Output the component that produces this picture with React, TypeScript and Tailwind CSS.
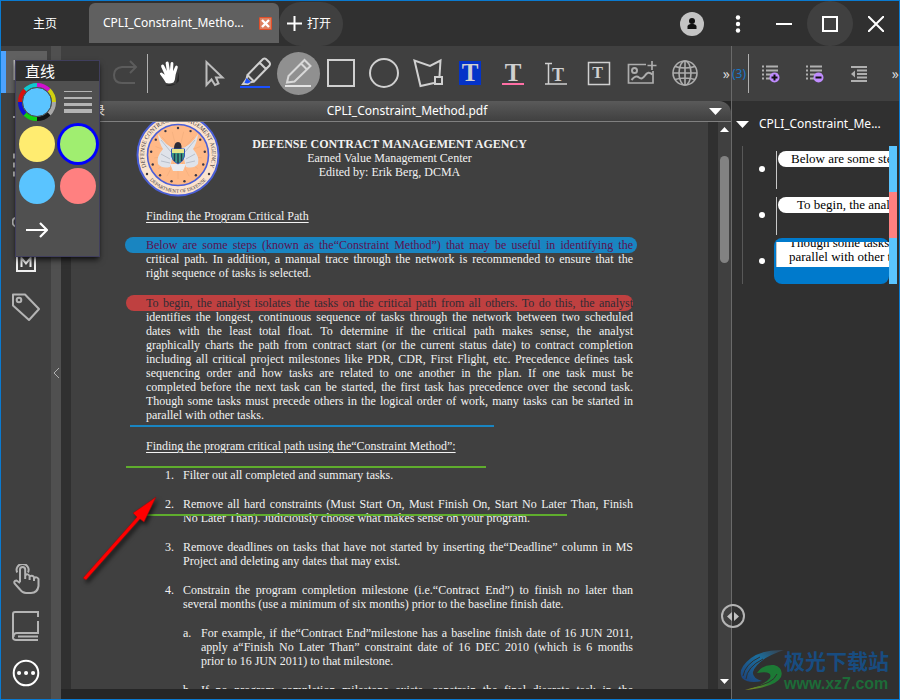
import type { ReactNode } from 'react'

const uiFont = "font-['Noto_Sans','Noto_Sans_CJK_SC',sans-serif]"
const docFont = "font-['Liberation_Serif',serif]"

type Tool = { name: string; icon: ReactNode; active?: boolean }

const Glyph = ({ x, y, size, fill = '#d0d0d0' }: { x: number; y: number; size: number; fill?: string }) => (
  <text x={x} y={y} fontSize={size} fill={fill} stroke="none" textAnchor="middle" fontFamily="Liberation Serif, serif" fontWeight="bold">
    T
  </text>
)

const tools: Tool[] = [
  {
    name: 'Hand',
    icon: (
      <g stroke="none">
        <path d="M17 33 Q25 36 31 29 L31 20 L28 32 Z" fill="#1c1c1c" opacity=".7" />
        <path
          d="M18 31 L15.5 27 L12.2 22.5 Q11.4 20.6 13.5 20.6 L16.8 22.8 L13.2 15 Q12.6 12.9 14.4 12.5 Q15.6 12.4 16.1 13.6 L18.8 19 L17.6 11 Q17.7 9.4 19.2 9.4 Q20.4 9.4 20.7 10.7 L21.9 18.4 L22.6 11.3 Q22.9 9.8 24.2 9.9 Q25.5 10.1 25.4 11.6 L25 19.3 L27.2 14.6 Q27.9 13.3 29 13.7 Q30.2 14.3 29.7 15.8 L27.6 22.8 L26.8 28 L25.5 30.5 Q21.5 32.2 18 31Z"
          fill="#fff"
        />
      </g>
    ),
  },
  {
    name: 'Select',
    icon: <path d="M15.5 10 V33 L20.5 27.5 L24 33 L27.5 31.5 L25 25.5 H31.5 Z" stroke="#bdbdbd" />,
  },
  {
    name: 'Highlighter',
    icon: (
      <>
        <path d="M29 7 Q30.5 6 32 7 L35.5 10.5 Q36.5 12 35.5 13.5 L20 29.5 L13.5 23 Z M25.5 10.5 L32 17 M13.5 23 L12.5 27 L16 30.5 L20 29.5 M12.5 27 L9 32 H14 L16 30.5" />
        <path d="M12.5 26 L17 30 L13.5 31.5 L10.5 31 Z" fill="#1a50ff" stroke="none" />
        <path d="M6 35 H36" stroke="#1a50ff" />
      </>
    ),
  },
  {
    name: 'Line',
    active: true,
    icon: (
      <>
        <path d="M10 30.5 L11.5 24 L27.5 8 L33.5 14 L17.5 29.5 Z M24 11.5 L30 17.5" stroke="#d8d8d8" />
        <path d="M8 34 H34" stroke="#e4e4e4" />
      </>
    ),
  },
  { name: 'Rectangle', icon: <rect x="8" y="8" width="26" height="26" /> },
  { name: 'Ellipse', icon: <circle cx="21" cy="21" r="14" /> },
  {
    name: 'Polygon',
    icon: (
      <>
        <path d="M28 31 L14.5 34 L8.5 8.5 L24 14 L34.5 8.5 L33.5 24" />
        <rect x="29" y="25" width="7" height="7" />
      </>
    ),
  },
  {
    name: 'Highlight text',
    icon: (
      <>
        <rect x="10" y="9" width="22" height="24" fill="#0433c8" stroke="none" />
        <Glyph x={21} y={29} size={25} />
      </>
    ),
  },
  {
    name: 'Underline text',
    icon: (
      <>
        <Glyph x={21} y={29} size={25} />
        <path d="M10 32 H32" stroke="#ff6fa5" />
      </>
    ),
  },
  {
    name: 'Insert text',
    icon: (
      <>
        <path d="M10 11.5 H17 M13.5 11.5 V32 M10 32 H32" strokeWidth="1.5" />
        <Glyph x={23} y={29} size={18} />
      </>
    ),
  },
  {
    name: 'Text box',
    icon: (
      <>
        <rect x="10.5" y="10.5" width="21" height="22" strokeWidth="1.5" />
        <Glyph x={19.5} y={26} size={16} />
      </>
    ),
  },
  {
    name: 'Image',
    icon: (
      <g stroke="#adadad">
        <path d="M25 12.5 H7.5 V31 H32 V19 M31 9 V18 M26.5 13.5 H35.5" strokeWidth="1.7" />
        <circle cx="13.5" cy="18.5" r="2.5" />
        <path d="M10.5 28 Q15 22.5 18 25.5 Q21 28 24 23.5 Q27 18.5 31.5 22.5" />
      </g>
    ),
  },
  {
    name: 'Web link',
    icon: (
      <g stroke="#adadad" strokeWidth="1.6">
        <circle cx="21" cy="21" r="12" />
        <ellipse cx="21" cy="21" rx="6" ry="12" />
        <path d="M21 9 V33 M9 21 H33 M11 14.5 Q21 17.5 31 14.5 M11 27.5 Q21 24.5 31 27.5" />
      </g>
    ),
  },
]

const ToolButton = ({ name, icon, active }: Tool) => (
  <button aria-label={name} className={`size-[43px] shrink-0 rounded-full ${active ? 'bg-[#909090]' : ''}`}>
    <svg viewBox="0 0 43 43" width="43" height="43" fill="none" stroke="#d0d0d0" strokeWidth="2">
      {icon}
    </svg>
  </button>
)

const TitleBar = () => (
  <header className="flex h-[45px] shrink-0 items-center bg-[#303030] text-[12px] text-white">
    <button className="w-[88px] shrink-0">主页</button>
    <div className="mt-[2px] flex h-10 w-[190px] shrink-0 items-center justify-between self-start rounded-t-md bg-[#606060] pr-[7px] pl-[14px]">
      <span className="whitespace-nowrap">CPLI_Constraint_Metho...</span>
      <button aria-label="Close tab" className="grid size-[13px] place-items-center rounded-[1px] border border-[#e04f2a] bg-[#dd8060]">
        <svg width="9" height="9" viewBox="0 0 9 9" stroke="#fff" strokeWidth="2.4">
          <path d="M1 1 L8 8 M8 1 L1 8" />
        </svg>
      </button>
    </div>
    <button className="flex h-11 w-16 shrink-0 items-center gap-1 rounded-full bg-[#404040] pl-[7px]">
      <svg width="17" height="17" viewBox="0 0 17 17" stroke="#fff" strokeWidth="2">
        <path d="M8.5 1 V16 M1 8.5 H16" />
      </svg>
      打开
    </button>
    <div className="ml-auto flex h-full items-center">
      <button aria-label="Account" className="grid h-full w-[46px] place-items-center">
        <svg width="24" height="24" viewBox="0 0 24 24">
          <circle cx="12" cy="12" r="12" fill="#c4c4c4" />
          <circle cx="12" cy="9" r="3" fill="#111" />
          <path d="M7.5 17 V14 Q8 12.5 10.5 12 H13.5 Q16 12.5 16.5 14 V17 Z" fill="#111" />
        </svg>
      </button>
      <button aria-label="Menu" className="grid h-full w-[46px] place-items-center">
        <svg width="6" height="18" viewBox="0 0 6 18" fill="#fff">
          <circle cx="3" cy="2.5" r="2.2" />
          <circle cx="3" cy="9" r="2.2" />
          <circle cx="3" cy="15.5" r="2.2" />
        </svg>
      </button>
      <button aria-label="Minimise" className="grid h-full w-[46px] place-items-center">
        <svg width="16" height="16" viewBox="0 0 16 16" stroke="#fff" strokeWidth="2">
          <path d="M0 8 H16" />
        </svg>
      </button>
      <button aria-label="Maximise" className="grid h-full w-[46px] place-items-center rounded-full bg-[#404040]">
        <svg width="16" height="16" viewBox="0 0 16 16" fill="none" stroke="#fff" strokeWidth="2">
          <rect x="1" y="1" width="14" height="14" />
        </svg>
      </button>
      <button aria-label="Close" className="grid h-full w-[46px] place-items-center">
        <svg width="16" height="16" viewBox="0 0 16 16" stroke="#fff" strokeWidth="2">
          <path d="M0 0 L16 16 M16 0 L0 16" />
        </svg>
      </button>
    </div>
  </header>
)

const sideTop: Tool[] = [
  { name: 'Pages', active: true, icon: <path d="M1.5 4 V22 H26 V4 Z" /> },
  { name: 'Outline', icon: <path d="M1 13 H26" /> },
  { name: 'Thumbnails', icon: <path d="M1 5 H6 M1 14 H6 M1 23 H6" strokeWidth="5" /> },
  {
    name: 'Search',
    icon: (
      <>
        <circle cx="5" cy="24" r="4.5" />
        <path d="M9 20 H24" />
      </>
    ),
  },
  {
    name: 'Bookmarks',
    icon: (
      <g stroke="#f0f0f0">
        <path d="M5 4 V26 H23 V4" />
        <path d="M9.5 22 V13 L14 18.5 L18.5 13 V22" />
      </g>
    ),
  },
  {
    name: 'Tags',
    icon: (
      <>
        <path d="M1 2.5 H13 L27 17 L17 28 L1 13.5 Z" strokeLinejoin="round" />
        <circle cx="7" cy="8" r="2.3" />
      </>
    ),
  },
]

const sideBottom: Tool[] = [
  {
    name: 'Touch mode',
    icon: (
      <path d="M8 18 V5.5 A2.6 2.6 0 0 1 13.2 5.5 V15 M13.2 11.5 Q15.5 9 17.6 12 V16 M17.6 12.5 Q20 10.5 22 13.2 V17 M22 14.5 Q24.5 12 26.5 15 V22 Q25.5 29 19 29 H14 Q10.5 29 8 25.5 L3 20 Q1 17 4.5 16.5 L8 19 M5.2 8.5 A6 6 0 1 1 16 8.5" />
    ),
  },
  {
    name: 'Dictionary',
    icon: <path d="M26 6 V1 H3 Q1 1 1 3 V27 Q1.5 29 4 29 H26 M26 10 V22 H5 Q1.5 22 1.5 26 M6 25.5 H26" />,
  },
  {
    name: 'More',
    icon: (
      <g stroke="#fff">
        <circle cx="14" cy="15" r="12.3" />
        <path d="M7 15 H7.1 M14 15 H14.1 M21 15 H21.1" strokeWidth="4" strokeLinecap="round" />
      </g>
    ),
  },
]

const SideButton = ({ name, icon, active }: Tool) => (
  <button
    aria-label={name}
    className={`flex h-[42px] w-[46px] items-center ${active ? 'border-l-[5px] border-[#4da3ff] bg-[#606060] pl-[7px]' : 'pl-[11px]'}`}
  >
    <svg width="29" height="30" viewBox="0 0 29 30" fill="none" stroke="#b4b4b4" strokeWidth="2">
      {icon}
    </svg>
  </button>
)

const SideBar = () => (
  <nav className="flex w-[50px] shrink-0 flex-col justify-between bg-[#404040] py-[5px]">
    <div className="flex flex-col gap-[5px]">
      {sideTop.map((item) => (
        <SideButton key={item.name} {...item} />
      ))}
    </div>
    <div className="flex flex-col gap-[5px]">
      {sideBottom.map((item) => (
        <SideButton key={item.name} {...item} />
      ))}
    </div>
  </nav>
)

// Every line but the last of a paragraph is stretched to the column width
const Lines = ({ lines, open }: { lines: string[]; open?: boolean }) => (
  <>
    {lines.map((line, i) => (
      <span key={line} className={`block ${i < lines.length - 1 || open ? '[text-align-last:justify]' : ''}`}>
        {line}
      </span>
    ))}
  </>
)

const Item = ({ mark, children }: { mark: string; children: ReactNode }) => (
  <li className="relative flex">
    <span className="w-[18px] shrink-0">{mark}</span>
    <div className="min-w-0 flex-1">{children}</div>
  </li>
)

const stars = Array.from({ length: 13 }, (_, i) => (i * 2 * Math.PI) / 13 - Math.PI / 2)

const Seal = () => (
  <svg width="84" height="84" viewBox="-42 -42 84 84">
    <circle r="40.5" fill="#fbe3cd" stroke="#4a5fd8" strokeWidth="2" />
    <circle r="30.5" fill="#ffb987" stroke="#4a5fd8" strokeWidth="1.6" />
    <g stroke="#eca878" strokeWidth=".5">
      {stars.map((a) => (
        <path key={a} d={`M0 0 L${Math.cos(a + 0.24) * 24} ${Math.sin(a + 0.24) * 24}`} />
      ))}
    </g>
    {stars.map((a) => (
      <circle key={a} cx={Math.cos(a) * 27} cy={Math.sin(a) * 27} r="1.2" fill="#3b3544" />
    ))}
    <path d="M-2 -6 Q-13 -9 -20 -21 Q-19 -12 -15 -6 Q-22 2 -20 9 Q-16 14 -8 12 L-6 4 Z" fill="#dfe3ea" />
    <path d="M2 -6 Q13 -9 20 -21 Q19 -12 15 -6 Q22 2 20 9 Q16 14 8 12 L6 4 Z" fill="#dfe3ea" />
    <path d="M-17 -15 L-7 -3 M-17 -1 L-8 4 M-17 6 L-8 8 M17 -15 L7 -3 M17 -1 L8 4 M17 6 L8 8" stroke="#aeb6c2" strokeWidth=".8" />
    <path d="M-8 9 L-5 16 H5 L8 9" fill="#e8ebf0" />
    <path d="M-4 -6 Q-4 -13 0 -13 Q4 -13 3.5 -6 Z" fill="#2c2c38" />
    <path d="M-6.5 -6 H6.5 V1 Q6 6 0 9 Q-6 6 -6.5 1 Z" fill="#3d9c86" stroke="#3557b8" />
    <path d="M-6 -6 H6 V-2 H-6 Z" fill="#e6e68a" />
    <path d="M-3.5 -1.5 V6 M0 -1.5 V8 M3.5 -1.5 V6" stroke="#22374e" strokeWidth="1.4" />
    <path id="seal-top" d="M-29 17.5 A33.9 33.9 0 1 1 29 17.5" fill="none" />
    <path id="seal-foot" d="M-32 20 A37.7 37.7 0 0 0 32 20" fill="none" />
    <g fontFamily="Liberation Serif, serif" fill="#40383c" textAnchor="middle">
      <text fontSize="6">
        <textPath href="#seal-top" startOffset="50%">
          DEFENSE CONTRACT MANAGEMENT AGENCY
        </textPath>
      </text>
      <text fontSize="5">
        <textPath href="#seal-foot" startOffset="50%">
          DEPARTMENT OF DEFENSE
        </textPath>
      </text>
    </g>
    <circle cx="-31" cy="19" r="1.2" fill="#40383c" />
    <circle cx="31" cy="19" r="1.2" fill="#40383c" />
  </svg>
)

const Page = () => (
  <article className={`relative min-w-0 flex-1 overflow-hidden bg-[#404040] px-[75px] pt-[15px] text-[12px] leading-[14px] text-[#f2f2f2] ${docFont}`}>
    <div className="absolute top-[-9px] left-[65px]">
      <Seal />
    </div>
    <div className="text-center">
      <h1 className="font-bold">DEFENSE CONTRACT MANAGEMENT AGENCY</h1>
      <p>Earned Value Management Center</p>
      <p>Edited by: Erik Berg, DCMA</p>
    </div>
    <div className="mt-[30px] flex flex-col gap-[15px]">
      <h2 className="underline underline-offset-2">Finding the Program Critical Path</h2>
      <p>
        <span className="relative block text-[#5c1150] [text-align-last:justify]">
          <span className="absolute -top-px -right-1 -left-[21px] h-4 rounded-full bg-[#1985c1]" />
          <span className="relative">Below are some steps (known as the“Constraint Method”) that may be useful in identifying the</span>
        </span>
        <Lines
          lines={[
            'critical path. In addition, a manual trace through the network is recommended to ensure that the',
            'right sequence of tasks is selected.',
          ]}
        />
      </p>
      <p className="relative mt-px mb-[2px]">
        <span className="relative block text-[#302c34] [text-align-last:justify]">
          <span className="absolute -top-px right-0 -left-5 h-4 rounded-full bg-[#bf4040]" />
          <span className="relative">To begin, the analyst isolates the tasks on the critical path from all others. To do this, the analyst</span>
        </span>
        <Lines
          lines={[
            'identifies the longest, continuous sequence of tasks through the network between two scheduled',
            'dates with the least total float. To determine if the critical path makes sense, the analyst',
            'graphically charts the path from contract start (or the current status date) to contract completion',
            'including all critical project milestones like PDR, CDR, First Flight, etc. Precedence defines task',
            'sequencing order and how tasks are related to one another in the plan. If one task must be',
            'completed before the next task can be started, the first task has precedence over the second task.',
            'Though some tasks must precede others in the logical order of work, many tasks can be started in',
            'parallel with other tasks.',
          ]}
        />
        <span className="absolute -bottom-[5px] -left-4 h-[2px] w-[364px] bg-[#1985c1]" />
      </p>
      <h2 className="relative">
        <span className="underline underline-offset-2">Finding the program critical path using the“Constraint Method”:</span>
        <span className="absolute -bottom-[15px] -left-5 h-[2px] w-[360px] bg-[#5fad2d]" />
      </h2>
      <ol className="flex flex-col gap-[15px] pl-[19px]">
        <Item mark="1.">Filter out all completed and summary tasks.</Item>
        <Item mark="2.">
          <Lines
            lines={[
              'Remove all hard constraints (Must Start On, Must Finish On, Start No Later Than, Finish',
              'No Later Than).  Judiciously choose what makes sense on your program.',
            ]}
          />
          <span className="absolute top-[17px] -left-5 h-[2px] w-[422px] bg-[#5fad2d]" />
        </Item>
        <Item mark="3.">
          <Lines
            lines={[
              'Remove deadlines on tasks that have not started by inserting the“Deadline” column in MS',
              'Project and deleting any dates that may exist.',
            ]}
          />
        </Item>
        <Item mark="4.">
          <Lines
            lines={[
              'Constrain the program completion milestone (i.e.“Contract End”) to finish no later than',
              'several months (use a minimum of six months) prior to the baseline finish date.',
            ]}
          />
          <ol className="mt-[15px] flex flex-col gap-[15px]">
            <Item mark="a.">
              <Lines
                lines={[
                  'For example, if the“Contract End”milestone has a baseline finish date of 16 JUN 2011,',
                  'apply a“Finish No Later Than” constraint date of 16 DEC 2010 (which is 6 months',
                  'prior to 16 JUN 2011) to that milestone.',
                ]}
              />
            </Item>
            <Item mark="b.">
              <Lines open lines={['If no program completion milestone exists, constrain the final discrete task in the']} />
            </Item>
          </ol>
        </Item>
      </ol>
    </div>
  </article>
)

const Viewer = () => (
  <main className="flex min-w-0 flex-1 flex-col bg-[#262626]">
    <div role="toolbar" className="flex h-[55px] shrink-0 items-center bg-[#404040]">
      <ToolButton name="Undo" icon={<path d="M16 9 L10 15 L16 21 M10 15 H24 Q31 15 31 23 Q31 31 24 31 H14" stroke="#5c5c5c" />} />
      <ToolButton name="Redo" icon={<path d="M26 9 L32 15 L26 21 M32 15 H18 Q10 16 10 23 Q10 31 18 31 H31" stroke="#5c5c5c" />} />
      <span className="h-[39px] w-px bg-[#b0b0b0]" />
      {tools.map((tool) => (
        <ToolButton key={tool.name} {...tool} />
      ))}
      <button aria-label="More tools" className="ml-auto pr-px text-[14px] text-[#d8d8d8]">
        »
      </button>
    </div>
    <div className="flex h-[21px] shrink-0 items-center rounded-tr-xl border-b border-[#808080] bg-linear-to-b from-[#5a5a5a] to-[#404040] text-[12px] text-white">
      <span className="w-[44px] shrink-0 text-right">目录</span>
      <span className="flex-1 text-center">CPLI_Constraint_Method.pdf</span>
      <button aria-label="Document list" className="w-[22px] shrink-0">
        <svg width="13" height="7" viewBox="0 0 13 7" fill="#fff">
          <path d="M0 0 H13 L6.5 7 Z" />
        </svg>
      </button>
    </div>
    <div className="mb-[10px] flex min-h-0 flex-1">
      <div className="w-[10px] shrink-0 bg-[#303030]" />
      <Page />
      <div className="w-[10px] shrink-0 bg-[#303030]" />
      <div className="flex w-[13px] shrink-0 flex-col items-center justify-between bg-[#404040] py-[5px]">
        <svg width="9" height="5" viewBox="0 0 9 5" fill="#fff">
          <path d="M0 5 H9 L4.5 0 Z" />
        </svg>
        <div className="mt-6 mb-auto h-[107px] w-[9px] rounded-full bg-[#828282]" />
        <svg width="9" height="5" viewBox="0 0 9 5" fill="#fff">
          <path d="M0 0 H9 L4.5 5 Z" />
        </svg>
      </div>
    </div>
  </main>
)

const Row = ({ bar, children }: { bar: string; children: ReactNode }) => (
  <li className="flex h-[46px] items-stretch">
    <span className="ml-4 size-[6px] shrink-0 self-center rounded-full bg-white" />
    <div className="ml-[9px] min-w-0 flex-1">{children}</div>
    <span className={`w-2 shrink-0 ${bar}`} />
  </li>
)

const listIcon = 'M0 1.5 H2 M4 1.5 H16 M0 5.5 H2 M4 5.5 H16 M0 9.5 H2 M4 9.5 H16 M0 13.5 H2 M4 13.5 H10'

const NotesPanel = () => (
  <aside className="relative flex w-[168px] shrink-0 flex-col border-l border-[#6a6a6a] bg-[#303030]">
    <div role="toolbar" className="flex h-[55px] shrink-0 items-center bg-[#404040]">
      <span className="w-4 shrink-0 text-[12px] text-[#1a78c8]">(3)</span>
      <span className="h-[39px] w-px shrink-0 bg-[#b0b0b0]" />
      <button aria-label="Expand all" className="grid h-full w-11 shrink-0 place-items-center">
        <svg width="18" height="18" viewBox="0 0 18 18" stroke="#b0b0b0" strokeWidth="2">
          <path d={listIcon} />
          <circle cx="12.5" cy="12.5" r="5" fill="#c08cff" stroke="none" />
          <path d="M9.5 12.5 H15.5 M12.5 9.5 V15.5" stroke="#111" />
        </svg>
      </button>
      <button aria-label="Collapse all" className="grid h-full w-11 shrink-0 place-items-center">
        <svg width="18" height="18" viewBox="0 0 18 18" stroke="#b0b0b0" strokeWidth="2">
          <path d={listIcon} />
          <circle cx="12.5" cy="12.5" r="5" fill="#c08cff" stroke="none" />
          <path d="M9.5 12.5 H15.5" stroke="#111" />
        </svg>
      </button>
      <button aria-label="Outdent" className="grid h-full w-11 shrink-0 place-items-center">
        <svg width="16" height="16" viewBox="0 0 16 16" stroke="#b0b0b0" strokeWidth="2">
          <path d="M0 1 H16 M6 4.5 H16 M6 8 H16 M6 11.5 H16 M0 15 H16" />
          <path d="M4 4.5 V11.5 L0 8 Z" fill="#b0b0b0" stroke="none" />
        </svg>
      </button>
      <button aria-label="More" className="ml-auto text-[14px] text-[#d8d8d8]">
        »
      </button>
    </div>
    <div className="flex h-[45px] shrink-0 items-center gap-[10px] pt-px pl-1 text-[12px] text-white">
      <svg width="13" height="7" viewBox="0 0 13 7" fill="#fff">
        <path d="M0 0 H13 L6.5 7 Z" />
      </svg>
      <span className="whitespace-nowrap">CPLI_Constraint_Me...</span>
    </div>
    <ul className={`mr-[2px] ml-[10px] border-l border-[#585858] text-[13px] leading-4 text-black ${docFont}`}>
      <Row bar="bg-[#5ac4ff]">
        <div className="mt-[5px] ml-[2px] h-[38px] border-l border-[#c8c8c8] pl-px">
          <div className="h-4 overflow-hidden rounded-l-full bg-white pl-[13px]">
            <div className="h-4 w-[113px] [text-align-last:justify]">Below are some steps</div>
          </div>
        </div>
      </Row>
      <Row bar="bg-[#ff8080]">
        <div className="mt-[5px] ml-[2px] h-[38px] border-l border-[#c8c8c8] pl-px">
          <div className="h-4 overflow-hidden rounded-l-full bg-white pl-[19px] whitespace-nowrap">To begin, the analyst</div>
        </div>
      </Row>
      <Row bar="bg-[#5ac4ff]">
        <div className="h-full rounded-lg bg-[#007acc] pt-1 pl-[2px]">
          <div className="flex h-[25px] flex-col justify-end overflow-hidden border-l border-[#c8c8c8] bg-white pb-[3px] pl-3 leading-[14px] whitespace-nowrap">
            <p>Though some tasks must</p>
            <p>parallel with other tasks.</p>
          </div>
        </div>
      </Row>
    </ul>
    <button aria-label="Resize panel" className="absolute bottom-[71px] -left-[11px] grid size-6 place-items-center rounded-full border-2 border-[#b4b4b4]">
      <svg width="12" height="9" viewBox="0 0 12 9" fill="#c0c0c0">
        <path d="M5 0 V9 L0 4.5 Z M7 0 V9 L12 4.5 Z" />
      </svg>
    </button>
    <div className="mt-auto flex items-center pb-[6px] pl-2">
      <svg width="44" height="42" viewBox="0 0 44 42" className="shrink-0">
        <defs>
          <linearGradient id="swirl-blue" x1="0" y1="1" x2="1" y2="0">
            <stop offset="0" stopColor="#1c3f78" />
            <stop offset=".6" stopColor="#1b6d9c" />
            <stop offset="1" stopColor="#3a3c44" />
          </linearGradient>
          <linearGradient id="swirl-green" x1="0" y1="1" x2="1" y2="0">
            <stop offset="0" stopColor="#8c8a20" />
            <stop offset=".5" stopColor="#1c7a35" />
            <stop offset="1" stopColor="#1c7a35" />
          </linearGradient>
        </defs>
        <path d="M44 1 Q24 0 11 9 Q-3 20 2 29 Q8 35 22 32 Q12 29 13 23 Q17 10 44 1Z" fill="url(#swirl-blue)" />
        <path d="M3 27 Q5 15 20 8 M6 30 Q7 18 23 10" stroke="#303030" strokeWidth="1" fill="none" />
        <path d="M17 24 Q23 15 34 16 Q44 19 41 28 Q36 38 5 41 Q25 36 30 29 Q33 21 17 24Z" fill="url(#swirl-green)" />
        <path d="M12 38 Q33 35 37 25" stroke="#303030" strokeWidth="1" fill="none" />
      </svg>
      <div className="whitespace-nowrap">
        <p className="text-[21px] leading-7 font-bold text-[#184c80]">极光下载站</p>
        <p className="font-['Liberation_Sans',sans-serif] text-[16px] leading-[18px] font-bold text-[#1d6b38]">www.xz7.com</p>
      </div>
    </div>
  </aside>
)

const wheel = ['#d010d0', '#d0d010', '#a8a8a8', '#141414', '#10d010', '#1010d8', '#d81010', '#10c8d0']

const segment = (i: number) => {
  const a = (i * Math.PI) / 4 - Math.PI / 2
  const b = a + Math.PI / 4
  return `M${Math.cos(a) * 17} ${Math.sin(a) * 17} A17 17 0 0 1 ${Math.cos(b) * 17} ${Math.sin(b) * 17}`
}

const LinePopup = () => (
  <section className="absolute top-[59px] left-[14px] w-[85px] border border-[#403e5c] bg-[#505050] shadow-md shadow-black/60">
    <h2 className="bg-[#2e2e2e] pl-[9px] text-[15px] leading-5 text-white">直线</h2>
    <div className="grid grid-cols-2 place-items-center overflow-hidden pb-1">
      <button aria-label="Custom colour" className="h-[42px]">
        <svg width="38" height="38" viewBox="-19 -19 38 38" fill="none" strokeWidth="4">
          {wheel.map((color, i) => (
            <path key={color} d={segment(i)} stroke={color} />
          ))}
          <circle r="14.5" fill="#5ac4ff" stroke="#4a4a4a" strokeWidth="1" />
        </svg>
      </button>
      <button aria-label="Line width" className="h-[42px]">
        <svg width="28" height="24" viewBox="0 0 28 24" fill="#b4b4b4">
          <path d="M0 1 H28 V2 H0Z M0 7 H28 V9 H0Z M0 13 H28 V16 H0Z M0 19 H28 V23 H0Z" />
        </svg>
      </button>
      <button aria-label="Yellow" className="my-[3px] size-9 rounded-full bg-[#ffec70]" />
      <button aria-label="Green" className="my-[3px] size-9 rounded-full bg-[#a0ee70] ring-3 ring-[#0000ff]" />
      <button aria-label="Blue" className="my-[3px] size-9 rounded-full bg-[#5ac4ff]" />
      <button aria-label="Red" className="my-[3px] size-9 rounded-full bg-[#ff8080]" />
      <button aria-label="Arrow line" className="grid h-[45px] place-items-center">
        <svg width="22" height="16" viewBox="0 0 22 16" fill="none" stroke="#fff" strokeWidth="2.2">
          <path d="M0 8 H21 M14 1 L21 8 L14 15" />
        </svg>
      </button>
    </div>
  </section>
)

const App = () => (
  <div className={`relative flex h-screen flex-col overflow-hidden border border-[#0a7ad0] ${uiFont}`}>
    <TitleBar />
    <div className="flex min-h-0 flex-1">
      <SideBar />
      <button aria-label="Collapse sidebar" className="grid w-[10px] shrink-0 place-items-center bg-[#505050]">
        <svg width="7" height="10" viewBox="0 0 7 10" fill="none" stroke="#b0b0b0">
          <path d="M6 0 L1 5 L6 10" />
        </svg>
      </button>
      <Viewer />
      <NotesPanel />
    </div>
    <LinePopup />
    <svg width="84" height="94" viewBox="0 0 84 94" className="pointer-events-none absolute top-[491px] left-[78px] drop-shadow-[2px_3px_2px_#000000a0]">
      <path d="M4 86 L58 25 L54 21 L77 5 L65 30 L61 27 L7 88 Z" fill="#ff0000" stroke="#8a0f0f" strokeWidth=".6" />
    </svg>
  </div>
)

export default App
